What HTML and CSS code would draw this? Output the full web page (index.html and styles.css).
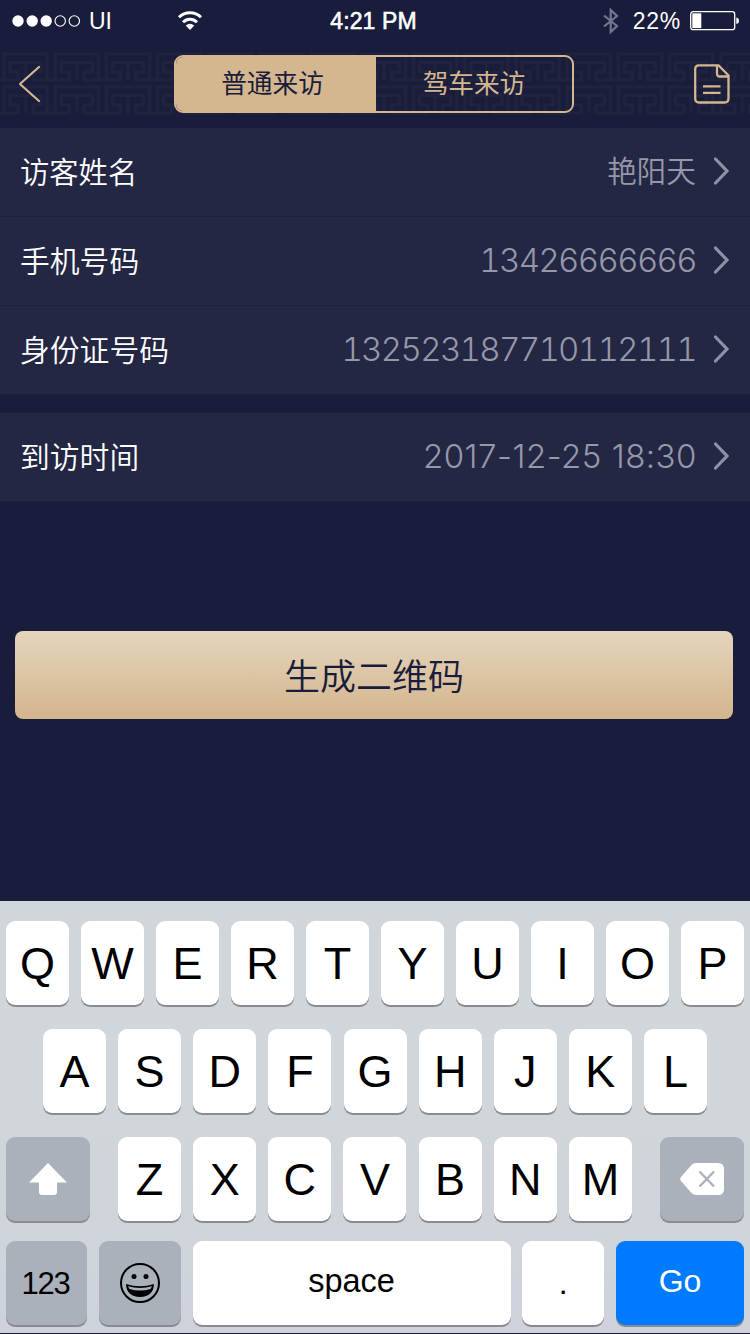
FILE: index.html
```html
<!DOCTYPE html>
<html lang="zh-CN">
<head>
<meta charset="utf-8">
<title>访客登记</title>
<link rel="stylesheet" href="styles.css">
</head>
<body>
<div class="screen">
  <div class="status">
    <div class="carrier">
      <svg width="68" height="14" viewBox="0 0 68 14"><g fill="#fff"><circle cx="6" cy="7" r="5.7"/><circle cx="20.2" cy="7" r="5.7"/><circle cx="34.2" cy="7" r="5.7"/></g><g fill="none" stroke="#fff" stroke-width="1.1"><circle cx="48.2" cy="7" r="5.2"/><circle cx="62.3" cy="7" r="5.2"/></g></svg>
      <span>UI</span>
      <svg class="wifi" width="26" height="20" viewBox="0 0 26 20"><g fill="none" stroke="#fff" stroke-width="3"><path d="M2 6.3C8 .3 18 .3 24 6.3"/><path d="M6 11.2C10 7.3 16 7.3 20 11.2"/></g><path d="M8.7 14.5Q13 10.8 17.3 14.5L13 19Z" fill="#fff"/></svg>
    </div>
    <div class="clock">4:21 PM</div>
    <div class="power">
      <svg width="16" height="26" viewBox="0 0 16 26"><path d="M1 7.5L14 18L7.7 24V2L14 8L1 18.5" fill="none" stroke="#747792" stroke-width="2.2"/></svg>
      <span>22%</span>
      <svg width="50" height="20" viewBox="0 0 50 20"><rect x=".7" y=".7" width="44" height="18" rx="2.5" fill="none" stroke="#fff" stroke-width="1.3"/><rect x="2.3" y="2.3" width="9" height="14.8" fill="#fff"/><path d="M46.3 6.5Q49 7 49 9.8T46.3 13Z" fill="#fff"/></svg>
    </div>
  </div>
  <div class="header">
    <svg class="fret" width="750" height="68">
      <defs><pattern id="fret" width="51.2" height="33" patternUnits="userSpaceOnUse">
        <path d="M4 30V4H47.2V30M-1 30H18V22H10V12.5H41.2V22H33.2V30H52.2M25.6 12.5V30" fill="none" stroke="#20233f" stroke-width="3.2"/>
      </pattern></defs>
      <rect width="750" height="67" fill="url(#fret)"/>
    </svg>
    <svg class="back" width="22" height="38" viewBox="0 0 22 38"><path d="M20 2L1.5 18.5Q1 19 1.5 19.5L20 36" fill="none" stroke="#d4b68f" stroke-width="2.2" stroke-linecap="round"/></svg>
    <div class="tabs"><div class="tab active">普通来访</div><div class="tab">驾车来访</div></div>
    <svg class="doc" width="37" height="41" viewBox="0 0 37 41"><g fill="none" stroke="#d4b68f" stroke-width="2.3"><path d="M6 1.3H25.5L35.5 11.5V34.5Q35.5 38.5 31.5 38.5H6Q2.2 38.5 2.2 34.5V5Q2.2 1.3 6 1.3Z"/><path d="M24 2V9.5Q24 12.5 26.5 12.5H35M10 22.3H27.5M10 28.8H27.5"/></g></svg>
  </div>
  <div class="group">
    <div class="row"><span class="label short">访客姓名</span><span class="name">艳阳天</span><svg class="chev" width="15" height="28" viewBox="0 0 15 28"><path d="M1.5 2L13 14L1.5 26"/></svg></div>
    <div class="row"><span class="label">手机号码</span><span class="num">13426666666</span><svg class="chev" width="15" height="28" viewBox="0 0 15 28"><path d="M1.5 2L13 14L1.5 26"/></svg></div>
    <div class="row"><span class="label">身份证号码</span><span class="num">132523187710112111</span><svg class="chev" width="15" height="28" viewBox="0 0 15 28"><path d="M1.5 2L13 14L1.5 26"/></svg></div>
  </div>
  <div class="group second">
    <div class="row"><span class="label">到访时间</span><span class="num date">2017-12-25 18:30</span><svg class="chev" width="15" height="28" viewBox="0 0 15 28"><path d="M1.5 2L13 14L1.5 26"/></svg></div>
  </div>
  <div class="submit">生成二维码</div>
  <div class="keyboard">
    <div class="keys"><b>Q</b><b>W</b><b>E</b><b>R</b><b>T</b><b>Y</b><b>U</b><b>I</b><b>O</b><b>P</b></div>
    <div class="keys middle"><b>A</b><b>S</b><b>D</b><b>F</b><b>G</b><b>H</b><b>J</b><b>K</b><b>L</b></div>
    <div class="keys">
      <b class="gray side"><svg width="38" height="32" viewBox="0 0 38 32"><path d="M19 0L38 19.5H28V29Q28 32 25 32H13Q10 32 10 29V19.5H0Z" fill="#fff"/></svg></b>
      <div class="letters"><b>Z</b><b>X</b><b>C</b><b>V</b><b>B</b><b>N</b><b>M</b></div>
      <b class="gray side"><svg width="44" height="32" viewBox="0 0 44 32"><path d="M16 0H38Q44 0 44 6V26Q44 32 38 32H16Q13.5 32 11.5 30L1 18Q-.5 16 1 14L11.5 2Q13.5 0 16 0Z" fill="#fff"/><path d="M19.5 8.5L34 23.5M34 8.5L19.5 23.5" stroke="#aab1bb" stroke-width="2.4"/></svg></b>
    </div>
    <div class="keys bottom">
      <b class="gray digits">123</b>
      <b class="gray emoji"><svg width="42" height="42" viewBox="0 0 42 42"><circle cx="21" cy="21" r="19" fill="none" stroke="#000" stroke-width="2"/><circle cx="15" cy="14.5" r="2.5"/><circle cx="27" cy="14.5" r="2.5"/><path d="M7 22Q21 26.5 35 22Q34.5 34.5 21 35Q7.5 34.5 7 22Z"/><path d="M9 24.3Q21 27.8 33 24.3L31.5 27Q21 30 10.5 27Z" fill="#aab1bb"/></svg></b>
      <b class="space">space</b>
      <b class="dot">.</b>
      <b class="go">Go</b>
    </div>
  </div>
</div>
</body>
</html>
```
FILE: styles.css
```css
* { box-sizing: border-box; }
body { margin: 0; background: #191c3a; }
svg { display: block; flex: none; }
.screen { width: 750px; height: 1334px; overflow: hidden; display: flex; flex-direction: column; background: #191c3a; font-family: "Liberation Sans", "Noto Sans CJK SC", sans-serif; }
.status { height: 50px; flex: none; display: grid; grid-template-columns: 250px 1fr 250px; align-items: start; color: #fff; font-size: 23px; line-height: 42px; }
.carrier, .power { display: flex; align-items: center; height: 42px; }
.carrier { padding-left: 12px; }
.carrier span { margin-left: 9px; width: 26px; font-size: 23px; }
.wifi { margin-left: 62px; }
.clock { text-align: center; -webkit-text-stroke: .6px #fff; padding-right: 3px; letter-spacing: .1px; }
.power { justify-content: flex-end; padding-right: 10px; }
.power span { margin: 0 9px 0 14px; letter-spacing: .7px; }
.header { height: 78px; flex: none; position: relative; display: flex; justify-content: space-between; align-items: flex-start; padding: 5px 20px 0 19px; }
.fret { position: absolute; left: 0; top: 0; }
.back { position: relative; margin-top: 10px; }
.tabs { position: relative; width: 400px; height: 58px; margin-left: 14px; display: flex; border: 2px solid #d4b68f; border-radius: 9px; overflow: hidden; }
.tab { flex: 1; text-align: center; color: #d4b68f; font: 25.7px/49px "Noto Sans CJK SC", sans-serif; }
.active { flex: 0 0 200px; color: #191c3a; background: #d4b68f; padding-right: 7px; }
.doc { position: relative; margin-top: 9px; }
.group { flex: none; }
.second { margin-top: 18px; }
.row { height: 89px; display: flex; align-items: center; padding: 0 21px 2px 20px; background: #242744; border-bottom: 1px solid #1d203d; }
.label { flex: 1; color: #fff; font: 350 29.8px/84px "Noto Sans CJK SC", sans-serif; padding-bottom: 2px; }
.short { font-size: 29.3px; }
.name, .num { margin-right: 18px; color: #9698a9; }
.name { font: 350 29.7px/84px "Noto Sans CJK SC", sans-serif; padding-bottom: 2px; }
.num { font: 300 33px/84px Inter, "Liberation Sans", sans-serif; font-feature-settings: "tnum"; letter-spacing: -1.65px; }
.date { font-feature-settings: normal; letter-spacing: .5px; margin-right: 17px; }
.chev path { fill: none; stroke: #8f91a7; stroke-width: 3.2; stroke-linecap: round; }
.submit { flex: none; width: 718px; height: 88px; margin: 129px 0 0 15px; border-radius: 8px; background: linear-gradient(#e5d5bd, #d3b58d); color: #191c3a; text-align: center; font: 350 36px/87px "Noto Sans CJK SC", sans-serif; }
.keyboard { margin-top: 182px; height: 432px; flex: none; background: linear-gradient(#d1d6da 45%, #cfd2db); padding-top: 20px; }
.keys { display: flex; justify-content: space-between; padding: 0 6px; height: 84px; margin-bottom: 24px; }
.middle { padding: 0 43px; }
.letters { display: flex; justify-content: space-between; width: 514px; }
.keys b { display: flex; align-items: center; justify-content: center; width: 63px; height: 84px; border-radius: 9px; background: #fff; box-shadow: 0 2px 0 #898b8f; color: #000; font-weight: 400; font-size: 45px; padding-top: 1px; }
.keys .gray { background: #aab1bb; }
.keys .side { width: 84px; padding-bottom: 1px; }
.bottom { margin-top: -4px; }
.bottom b { font-size: 32px; }
.bottom .digits { width: 81px; letter-spacing: -1.2px; font-size: 31px; padding-right: 2px; }
.bottom .emoji { width: 82px; padding-bottom: 2px; }
.bottom .space { width: 318px; font-size: 32.5px; letter-spacing: 0; padding-bottom: 4px; }
.bottom .dot { width: 82px; }
.bottom .go { width: 128px; background: #007aff; color: #fff; padding-bottom: 4px; }
```
